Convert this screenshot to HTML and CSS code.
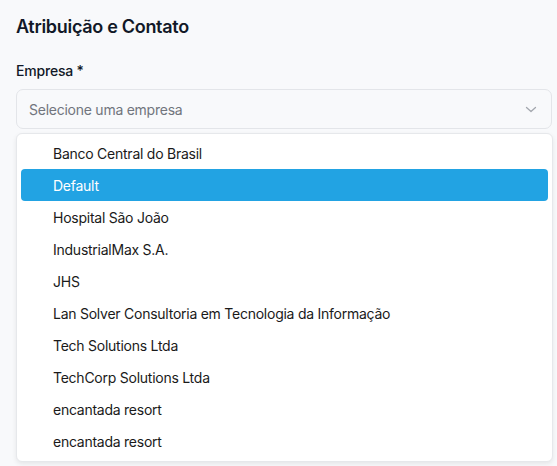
FILE: index.html
```html
<!DOCTYPE html>
<html lang="pt-BR">
<head>
<meta charset="utf-8">
<link rel="stylesheet" href="styles.css">
</head>
<body>
<section class="panel">
  <h2 class="title">Atribuição e Contato</h2>
  <label class="label">Empresa *</label>
  <div class="select">
    <span class="placeholder">Selecione uma empresa</span>
    <svg class="chev" width="18" height="18" viewBox="0 0 18 18" fill="none" stroke="currentColor" stroke-width="1.3" stroke-linecap="round" stroke-linejoin="round"><path d="M4.5 7.5l4.5 4 4.5-4"/></svg>
  </div>
  <div class="menu">
    <div class="item">Banco Central do Brasil</div>
    <div class="item active">Default</div>
    <div class="item">Hospital São João</div>
    <div class="item">IndustrialMax S.A.</div>
    <div class="item">JHS</div>
    <div class="item">Lan Solver Consultoria em Tecnologia da Informação</div>
    <div class="item">Tech Solutions Ltda</div>
    <div class="item">TechCorp Solutions Ltda</div>
    <div class="item">encantada resort</div>
    <div class="item">encantada resort</div>
  </div>
</section>
</body>
</html>
```
FILE: styles.css
```css
* { box-sizing: border-box; }
html, body { margin: 0; padding: 0; }
body {
  background: #f8f9fb;
  font-family: Inter, "Noto Sans", sans-serif;
  color: #111827;
  width: 557px;
  height: 466px;
  overflow: hidden;
}
.panel {
  padding: 15px 5px 0 16px;
  display: flex;
  flex-direction: column;
}
.title {
  margin: 0;
  font-size: 18px;
  font-weight: 600;
  line-height: 24px;
  color: #111827;
  letter-spacing: -0.3px;
}
.label {
  margin-top: 22px;
  font-size: 14px;
  font-weight: 500;
  line-height: 20px;
  color: #111827;
  letter-spacing: -0.2px;
}
.select {
  margin-top: 8px;
  height: 40px;
  width: 536px;
  border: 1px solid #e3e5e9;
  border-radius: 7px;
  background: #f8f9fb;
  display: flex;
  align-items: center;
  justify-content: space-between;
  padding: 0 11px 0 12px;
}
.placeholder {
  font-size: 14px;
  color: #71757d;
  letter-spacing: -0.25px;
}
.chev { color: #a3a7ae; }
.menu {
  margin-top: 4px;
  width: 537px;
  background: #fff;
  border: 1px solid #e6e8eb;
  border-radius: 6px;
  padding: 3px 4px 4px;
  box-shadow: 0 2px 5px rgba(0,0,0,0.08);
  display: flex;
  flex-direction: column;
}
.item {
  height: 32px;
  display: flex;
  align-items: center;
  padding-left: 32px;
  font-size: 14px;
  color: #1a1a1a;
  border-radius: 4px;
  letter-spacing: -0.25px;
}
.item.active {
  background: #22a3e3;
  color: #fff;
}
```
